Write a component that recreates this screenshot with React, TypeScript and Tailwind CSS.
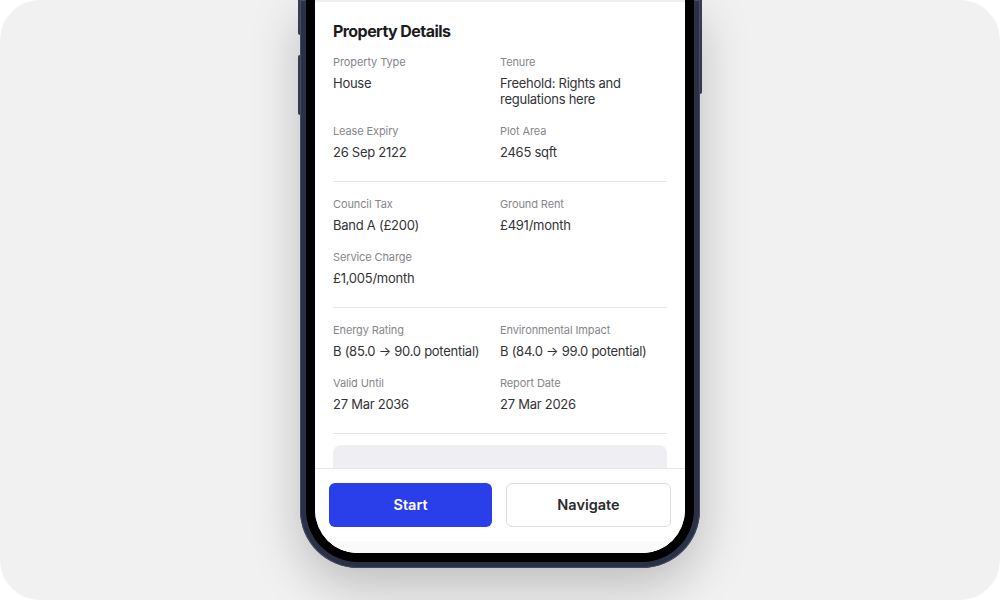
import React from "react";

type Field = { label: string; value: React.ReactNode };

const sections: Field[][] = [
  [
    { label: "Property Type", value: "House" },
    { label: "Tenure", value: "Freehold: Rights and regulations here" },
    { label: "Lease Expiry", value: "26 Sep 2122" },
    { label: "Plot Area", value: "2465 sqft" },
  ],
  [
    { label: "Council Tax", value: "Band A (£200)" },
    { label: "Ground Rent", value: "£491/month" },
    { label: "Service Charge", value: "£1,005/month" },
  ],
  [
    { label: "Energy Rating", value: "B (85.0 → 90.0 potential)" },
    { label: "Environmental Impact", value: "B (84.0 → 99.0 potential)" },
    { label: "Valid Until", value: "27 Mar 2036" },
    { label: "Report Date", value: "27 Mar 2026" },
  ],
];

function FieldGrid({ fields }: { fields: Field[] }) {
  return (
    <div className="grid grid-cols-2 gap-y-4">
      {fields.map((f) => (
        <div key={f.label} className="pr-[18px]">
          <div className="text-[11px] leading-4 tracking-[-0.01em] text-[#86868b]">{f.label}</div>
          <div className="mt-[5px] text-[13px] leading-4 tracking-[-0.02em] text-[#333336] whitespace-pre-line">
            {f.value}
          </div>
        </div>
      ))}
    </div>
  );
}

export default function App() {
  return (
    <div className="w-[1000px] h-[600px] bg-white" style={{ fontFamily: "Inter, 'Noto Sans', sans-serif" }}>
      <div className="w-full h-full rounded-[40px] bg-[#f1f1f1] overflow-hidden flex justify-center">
        <div className="relative w-[400px] h-[568px] shrink-0">
          {/* side buttons */}
          <div className="absolute left-[-2px] top-0 w-[4px] h-[35px] rounded-b-[2px] bg-[#39415a]" />
          <div className="absolute left-[-2px] top-[55px] w-[4px] h-[60px] rounded-[2px] bg-[#39415a]" />
          <div className="absolute right-[-2px] top-0 w-[4px] h-[94px] rounded-b-[2px] bg-[#39415a]" />
          <div className="relative w-full h-full rounded-b-[58px] bg-[#2a3145] px-[6px] pb-[6px] shadow-[0_18px_50px_rgba(0,0,0,0.22),inset_0_0_0_1px_#434b63]">
            <div className="w-full h-full rounded-b-[52px] bg-black px-[9px] pb-[9px]">
              <div className="w-full h-full rounded-b-[43px] bg-white overflow-hidden flex flex-col">
                <div className="h-[2px] bg-[#f0f0f2]" />
                <div className="flex-1 overflow-hidden px-[18px]">
                  <div className="pt-[17px] text-[16px] leading-6 font-bold tracking-[-0.035em] text-[#1c1c1e]">
                    Property Details
                  </div>
                  <div className="mt-[11px] pb-[21px] border-b border-[#e6e6e8]">
                    <FieldGrid fields={sections[0]} />
                  </div>
                  <div className="pt-[14px] pb-[21px] border-b border-[#e6e6e8]">
                    <FieldGrid fields={sections[1]} />
                  </div>
                  <div className="pt-[14px] pb-[21px] border-b border-[#e6e6e8]">
                    <FieldGrid fields={sections[2]} />
                  </div>
                  <div className="mt-[11px] h-[80px] rounded-[8px] bg-[#efeff3]" />
                </div>
                <div className="border-t border-[#e8e8ea] bg-white">
                  <div className="flex gap-[14px] px-[14px] pt-[14px] pb-[14px]">
                    <button className="flex-1 h-[44px] rounded-[6px] bg-[#2a3eea] text-white text-[14.5px] font-semibold">
                      Start
                    </button>
                    <button className="flex-1 h-[44px] rounded-[6px] border border-[#dcdce0] bg-white text-[#2c2c2e] text-[14.5px] font-semibold">
                      Navigate
                    </button>
                  </div>
                  <div className="h-[12px] bg-[#fafafb]" />
                </div>
              </div>
            </div>
          </div>
        </div>
      </div>
    </div>
  );
}
